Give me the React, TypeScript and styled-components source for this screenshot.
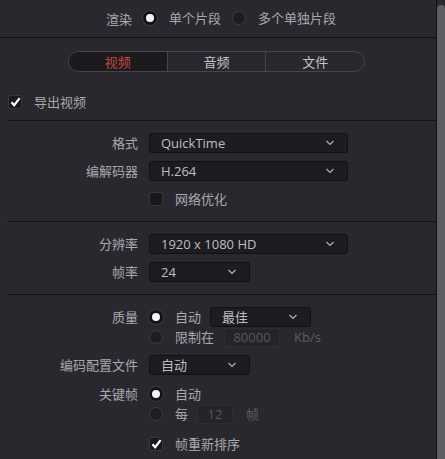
import React from "react";
import styled, { createGlobalStyle } from "styled-components";

const Global = createGlobalStyle`
  html, body { margin: 0; padding: 0; background: #28282e; }
  body {
    font-family: "Noto Sans CJK SC", "Noto Sans", sans-serif;
    font-size: 13px;
    color: #a8a8ad;
    overflow: hidden;
  }
`;

const Frame = styled.div`
  display: flex;
  width: 445px;
  height: 459px;
  background: #28282e;
`;

const Content = styled.div`
  flex: 1;
  display: flex;
  flex-direction: column;
`;

const ScrollTrack = styled.div`
  width: 8px;
  border-left: 1px solid #121215;
  padding-top: 5px;
  display: flex;
`;

const ScrollThumb = styled.div`
  flex: 1;
  background: #5d5e63;
  border-radius: 4px 4px 0 0;
`;

const TopBar = styled.div`
  height: 38px;
  flex: none;
  box-sizing: border-box;
  border-bottom: 1px solid #111114;
  display: flex;
  align-items: center;
  justify-content: center;
  gap: 11px;
  padding-left: 6px;
  padding-bottom: 1px;
`;

const Option = styled.label`
  display: flex;
  align-items: center;
  gap: 12px;
  height: 20px;
  line-height: 20px;
  white-space: nowrap;
`;

const RadioDot = styled.span<{ $on?: boolean }>`
  width: 14px;
  height: 14px;
  border-radius: 50%;
  box-sizing: border-box;
  flex: none;
  background: ${(p) => (p.$on ? "#f4f4f4" : "#1e1e21")};
  border: ${(p) => (p.$on ? "3.5px solid #141416" : "1px solid #3c3c41")};
  box-shadow: ${(p) => (p.$on ? "0 0 0 1px #3a3a3e" : "none")};
`;

const Section = styled.div<{ $top: number; $bottom: number; $line?: boolean }>`
  flex: none;
  padding-top: ${(p) => p.$top}px;
  padding-bottom: ${(p) => p.$bottom}px;
  margin-left: 7px;
  border-bottom: ${(p) => (p.$line ? "1px solid #141417" : "none")};
  display: flex;
  flex-direction: column;
`;

const Tabs = styled.div`
  display: flex;
  width: 297px;
  height: 21px;
  margin: 0 0 20px 61px;
  border: 1px solid #45454a;
  border-radius: 11px;
  overflow: hidden;
  box-sizing: border-box;
`;

const Tab = styled.div<{ $active?: boolean }>`
  flex: 1;
  display: flex;
  align-items: center;
  justify-content: center;
  font-size: 13px;
  line-height: 19px;
  color: ${(p) => (p.$active ? "#c9473f" : "#c4c4c8")};
  background: ${(p) => (p.$active ? "#1b1b1e" : "transparent")};
  & + & { border-left: 1px solid #45454a; }
`;

const ExportRow = styled.label`
  display: flex;
  align-items: center;
  gap: 12px;
  height: 20px;
  line-height: 20px;
  margin-left: 1px;
  margin-bottom: 8px;
`;

const Box = styled.span`
  width: 14px;
  height: 14px;
  box-sizing: border-box;
  border: 1px solid #38383c;
  border-radius: 2px;
  background: #19191b;
  display: flex;
  align-items: center;
  justify-content: center;
  flex: none;
`;

const Row = styled.div<{ $gap?: number; $indent?: boolean }>`
  display: flex;
  align-items: center;
  height: 20px;
  margin-bottom: ${(p) => p.$gap ?? 8}px;
  padding-left: ${(p) => (p.$indent ? 142 : 0)}px;
`;

const Label = styled.div`
  width: 131px;
  margin-right: 11px;
  text-align: right;
  white-space: nowrap;
  line-height: 20px;
  flex: none;
`;

const Select = styled.div<{ $w: number }>`
  width: ${(p) => p.$w}px;
  height: 20px;
  box-sizing: border-box;
  background: #1d1d21;
  border: 1px solid #111113;
  border-radius: 3px;
  display: flex;
  align-items: center;
  justify-content: space-between;
  padding: 0 12px 0 11px;
  font-family: "Open Sans", "Noto Sans CJK SC", sans-serif;
  font-size: 13px;
  line-height: 18px;
  color: #bdbdc1;
  flex: none;
`;

const Inline = styled.div<{ $gap: number }>`
  display: flex;
  align-items: center;
  gap: ${(p) => p.$gap}px;
`;

const NumField = styled.div<{ $w: number }>`
  width: ${(p) => p.$w}px;
  height: 19px;
  box-sizing: border-box;
  background: #252529;
  border: 1px solid #2e2e32;
  border-radius: 2px;
  display: flex;
  align-items: center;
  justify-content: center;
  font-family: "Open Sans", sans-serif;
  font-size: 13px;
  line-height: 17px;
  color: #56565a;
`;

const Dim = styled.span`
  color: #5e5e63;
  font-family: "Open Sans", "Noto Sans CJK SC", sans-serif;
  line-height: 20px;
  margin-left: 4px;
`;

const Chevron = () => (
  <svg width="10" height="6" viewBox="0 0 10 6">
    <path d="M1.5 1 L5 4.5 L8.5 1" fill="none" stroke="#b0b0b4" strokeWidth="1.2" />
  </svg>
);

const Check = () => (
  <svg width="11" height="10" viewBox="0 0 11 10">
    <path d="M1.5 5.2 L4.2 8.2 L9.6 1.2" fill="none" stroke="#ffffff" strokeWidth="2.2" />
  </svg>
);

export default function App() {
  return (
    <>
      <Global />
      <Frame>
        <Content>
          <TopBar>
            <span>渲染</span>
            <Option>
              <RadioDot $on />
              单个片段
            </Option>
            <Option>
              <RadioDot />
              多个单独片段
            </Option>
          </TopBar>

          <Section $top={13} $bottom={0} $line>
            <Tabs>
              <Tab $active>视频</Tab>
              <Tab>音频</Tab>
              <Tab>文件</Tab>
            </Tabs>
            <ExportRow>
              <Box>
                <Check />
              </Box>
              导出视频
            </ExportRow>
          </Section>

          <Section $top={12} $bottom={4} $line>
            <Row>
              <Label>格式</Label>
              <Select $w={199}>
                QuickTime
                <Chevron />
              </Select>
            </Row>
            <Row>
              <Label>编解码器</Label>
              <Select $w={199}>
                H.264
                <Chevron />
              </Select>
            </Row>
            <Row $indent>
              <Option>
                <Box />
                网络优化
              </Option>
            </Row>
          </Section>

          <Section $top={12} $bottom={4} $line>
            <Row>
              <Label>分辨率</Label>
              <Select $w={199}>
                1920 x 1080 HD
                <Chevron />
              </Select>
            </Row>
            <Row>
              <Label>帧率</Label>
              <Select $w={101}>
                24
                <Chevron />
              </Select>
            </Row>
          </Section>

          <Section $top={12} $bottom={0}>
            <Row $gap={0}>
              <Label>质量</Label>
              <Inline $gap={9}>
                <Option>
                  <RadioDot $on />
                  自动
                </Option>
                <Select $w={101}>
                  最佳
                  <Chevron />
                </Select>
              </Inline>
            </Row>
            <Row $indent>
              <Inline $gap={10}>
                <Option>
                  <RadioDot />
                  限制在
                </Option>
                <NumField $w={56}>80000</NumField>
                <Dim>Kb/s</Dim>
              </Inline>
            </Row>
            <Row $gap={9}>
              <Label>编码配置文件</Label>
              <Select $w={101}>
                自动
                <Chevron />
              </Select>
            </Row>
            <Row $gap={0}>
              <Label>关键帧</Label>
              <Option>
                <RadioDot $on />
                自动
              </Option>
            </Row>
            <Row $gap={10} $indent>
              <Inline $gap={9}>
                <Option>
                  <RadioDot />
                  每
                </Option>
                <NumField $w={36}>12</NumField>
                <Dim>帧</Dim>
              </Inline>
            </Row>
            <Row $indent>
              <Option>
                <Box>
                  <Check />
                </Box>
                帧重新排序
              </Option>
            </Row>
          </Section>
        </Content>
        <ScrollTrack>
          <ScrollThumb />
        </ScrollTrack>
      </Frame>
    </>
  );
}
